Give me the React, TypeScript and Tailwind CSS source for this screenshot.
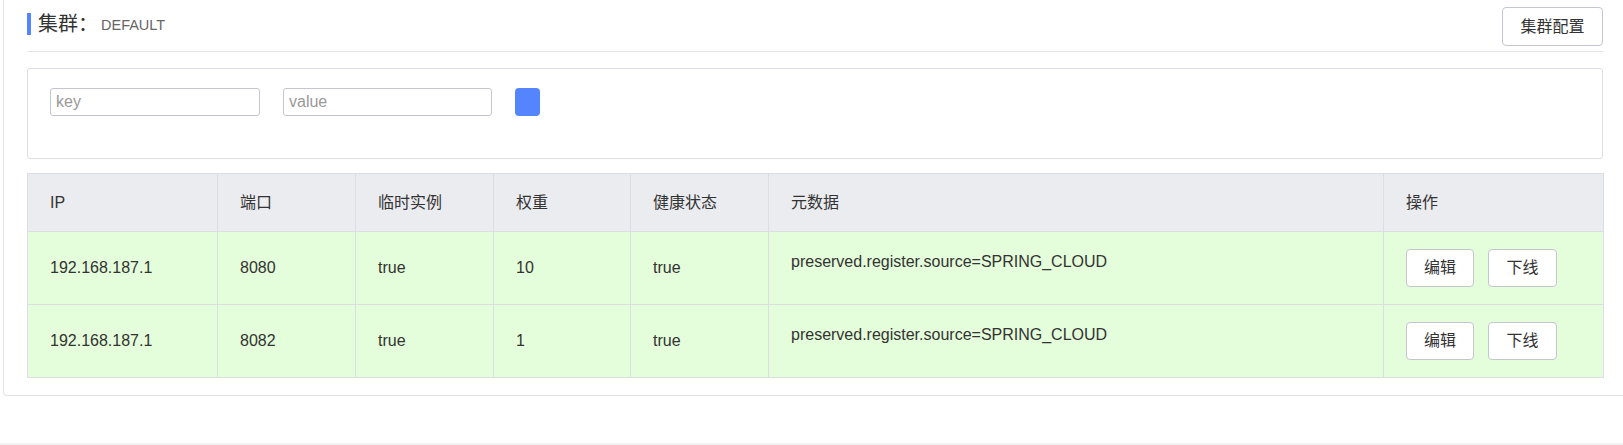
import React from "react";

const FONT = { fontFamily: '"Liberation Sans", "Noto Sans CJK SC", sans-serif' };

const cols = [
  { label: "IP", w: 190 },
  { label: "端口", w: 138 },
  { label: "临时实例", w: 138 },
  { label: "权重", w: 137 },
  { label: "健康状态", w: 138 },
  { label: "元数据", w: 615 },
  { label: "操作", w: 220 },
];

const rows = [
  { ip: "192.168.187.1", port: "8080", eph: "true", weight: "10", healthy: "true", meta: "preserved.register.source=SPRING_CLOUD" },
  { ip: "192.168.187.1", port: "8082", eph: "true", weight: "1", healthy: "true", meta: "preserved.register.source=SPRING_CLOUD" },
];

export default function App() {
  return (
    <div className="w-[1623px] h-[445px] overflow-hidden bg-white text-[#333]" style={FONT}>
      <div className="pl-[3px]">
        <div className="w-[1660px] border-l border-b border-[#e3e3e3] rounded-bl-[4px] pl-[23px] pt-[7px] pb-[17px]">
          <div className="w-[1576px]">
            {/* Title row */}
            <div className="flex justify-between items-start">
              <div className="flex items-center h-[28px] mt-[3px]">
                <div className="w-[4px] h-[22px] bg-[#5584ff]" />
                <span className="ml-[7px] text-[20px] leading-[28px] text-[#333]">集群：</span>
                <span className="text-[14.5px] leading-[28px] text-[#666] ml-[3px] mt-[2px]">DEFAULT</span>
              </div>
              <button className="h-[39px] w-[101px] border border-[#c4c6cf] rounded-[4px] bg-white text-[16px] text-[#333] flex items-center justify-center">
                集群配置
              </button>
            </div>
            <div className="mt-[5px] h-px bg-[#e6e6e6]" />

            {/* Filter box */}
            <div className="mt-[16px] h-[91px] border border-[#dcdee3] rounded-[3px] pl-[22px] pt-[19px]">
              <div className="flex items-center gap-[23px]">
                <input
                  placeholder="key"
                  className="w-[210px] h-[28px] border border-[#c4c6cf] rounded-[3px] pl-[5px] text-[16px] placeholder:text-[#999] outline-none"
                  style={FONT}
                />
                <input
                  placeholder="value"
                  className="w-[209px] h-[28px] border border-[#c4c6cf] rounded-[3px] pl-[5px] text-[16px] placeholder:text-[#999] outline-none"
                  style={FONT}
                />
                <button className="w-[25px] h-[28px] rounded-[4px] bg-[#5584ff]" />
              </div>
            </div>

            {/* Table */}
            <table className="mt-[14px] border-collapse table-fixed w-[1576px] text-[16px]">
              <colgroup>
                {cols.map((c) => (
                  <col key={c.label} style={{ width: c.w }} />
                ))}
              </colgroup>
              <thead>
                <tr className="h-[58px] bg-[#ebecf0]">
                  {cols.map((c) => (
                    <th
                      key={c.label}
                      className="border border-[#dcdee3] text-left font-normal pl-[22px] align-middle text-[#333]"
                    >
                      {c.label}
                    </th>
                  ))}
                </tr>
              </thead>
              <tbody>
                {rows.map((r, i) => (
                  <tr key={i} className="h-[73px] bg-[#e4fdda]">
                    <td className="border border-[#dcdee3] pl-[22px] align-middle">{r.ip}</td>
                    <td className="border border-[#dcdee3] pl-[22px] align-middle">{r.port}</td>
                    <td className="border border-[#dcdee3] pl-[22px] align-middle">{r.eph}</td>
                    <td className="border border-[#dcdee3] pl-[22px] align-middle">{r.weight}</td>
                    <td className="border border-[#dcdee3] pl-[22px] align-middle">{r.healthy}</td>
                    <td className="border border-[#dcdee3] pl-[22px] pt-[18px] align-top leading-[24px]">{r.meta}</td>
                    <td className="border border-[#dcdee3] pl-[22px] align-middle">
                      <div className="flex gap-[14px]">
                        <button className="w-[68px] h-[38px] border border-[#c4c6cf] rounded-[4px] bg-white text-[16px] text-[#333]">
                          编辑
                        </button>
                        <button className="w-[69px] h-[38px] border border-[#c4c6cf] rounded-[4px] bg-white text-[16px] text-[#333]">
                          下线
                        </button>
                      </div>
                    </td>
                  </tr>
                ))}
              </tbody>
            </table>
          </div>
        </div>
      </div>
      <div className="mt-[47px] h-[4px] bg-[#f2f2f2]" />
    </div>
  );
}
